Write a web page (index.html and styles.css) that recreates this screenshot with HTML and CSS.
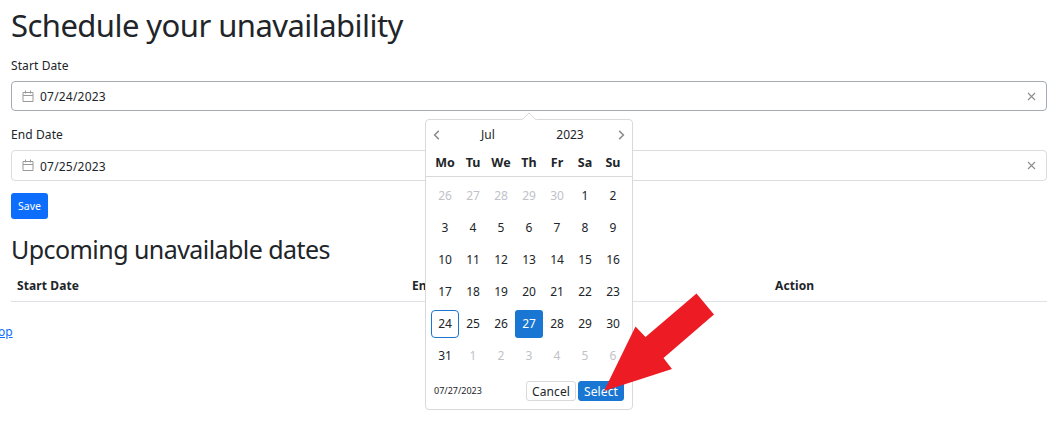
FILE: index.html
```html
<!DOCTYPE html>
<html lang="en">
<head>
<meta charset="utf-8">
<title>Schedule your unavailability</title>
<link rel="stylesheet" href="styles.css">
</head>
<body>
<main class="page">
  <h1 class="title"><span>Schedule your unavailability</span></h1>
  <label class="label">Start Date</label>
  <div class="field field-active">
    <svg class="cal-icon" viewBox="0 0 12 13"><path d="M1 2.500h10v9H1zM1 5.500h10M3.500 .5v3M8.500 .5v3"/></svg>
    <span class="value">07/24/2023</span>
    <svg class="clear-icon" viewBox="0 0 9 9"><path d="M1 1l7 7M8 1L1 8"/></svg>
    <div class="picker">
      <svg class="picker-tip" viewBox="0 0 16 9"><path class="tip-fill" d="M0 9V8L2 7L8 1L14 7L16 8V9z"/><path class="tip-line" d="M1 7.5L2.5 6.5L8 1L13.500 6.5L15 7.5"/></svg>
      <div class="picker-head">
        <svg class="chevron" viewBox="0 0 7 10"><path d="M5.800 .9L1.600 5l4.200 4.100"/></svg>
        <span class="month">Jul</span>
        <span class="year">2023</span>
        <svg class="chevron" viewBox="0 0 7 10"><path d="M1.200 .9L5.400 5l-4.200 4.100"/></svg>
      </div>
      <div class="weekdays"><b>Mo</b><b>Tu</b><b>We</b><b>Th</b><b>Fr</b><b>Sa</b><b>Su</b></div>
      <div class="days">
        <span class="out">26</span><span class="out">27</span><span class="out">28</span><span class="out">29</span><span class="out">30</span><span>1</span><span>2</span>
        <span>3</span><span>4</span><span>5</span><span>6</span><span>7</span><span>8</span><span>9</span>
        <span>10</span><span>11</span><span>12</span><span>13</span><span>14</span><span>15</span><span>16</span>
        <span>17</span><span>18</span><span>19</span><span>20</span><span>21</span><span>22</span><span>23</span>
        <span class="current">24</span><span>25</span><span>26</span><span class="selected">27</span><span>28</span><span>29</span><span>30</span>
        <span>31</span><span class="out">1</span><span class="out">2</span><span class="out">3</span><span class="out">4</span><span class="out">5</span><span class="out">6</span>
      </div>
      <div class="picker-foot">
        <span class="preview">07/27/2023</span>
        <button class="btn btn-cancel">Cancel</button>
        <button class="btn btn-select">Select</button>
      </div>
    </div>
  </div>
  <label class="label label-end">End Date</label>
  <div class="field field-end">
    <svg class="cal-icon" viewBox="0 0 12 13"><path d="M1 2.500h10v9H1zM1 5.500h10M3.500 .5v3M8.500 .5v3"/></svg>
    <span class="value">07/25/2023</span>
    <svg class="clear-icon" viewBox="0 0 9 9"><path d="M1 1l7 7M8 1L1 8"/></svg>
  </div>
  <button class="save">Save</button>
  <h2 class="subtitle"><span>Upcoming unavailable dates</span></h2>
  <div class="table-head"><b>Start Date</b><b>End Date</b><b>Action</b></div>
  <a class="link">op</a>
</main>
<svg class="arrow" viewBox="0 0 110 99"><path d="M92.500 .5L110 21.500L59.500 65L68 76L0 98L31.500 33.500L41.500 44z"/></svg>
</body>
</html>
```
FILE: styles.css
```css
* { box-sizing: border-box; }
body {
  margin: 0;
  width: 1061px;
  height: 422px;
  overflow: hidden;
  position: relative;
  background: #fff;
  color: #212529;
  font: 12px/18px "Noto Sans", "Open Sans", sans-serif;
}
svg { display: block; fill: none; }
button { font-family: inherit; margin: 0; padding: 0; }
.page { display: flex; flex-direction: column; padding: 6px 14px 0 11px; }
.title { margin: 0 0 13px; font-size: 31px; line-height: 38px; font-weight: 400; letter-spacing: -.55px; white-space: nowrap; }
.label { height: 18px; margin-bottom: 6px; letter-spacing: .1px; }
.field {
  position: relative;
  display: flex;
  align-items: center;
  height: 30px;
  padding: 0 10px;
  border: 1px solid #dadce0;
  border-radius: 4px;
}
.field-active { border-color: #a5abb3; }
.field-end { height: 31px; }
.label-end { margin-top: 15px; }
.value { margin-left: 6px; padding-top: 2px; flex: 1; letter-spacing: .2px; }
.cal-icon { width: 12px; height: 13px; stroke: #999; }
.clear-icon { width: 9px; height: 9px; stroke: #8c8c8c; stroke-width: 1.1; }
.save {
  width: 37px;
  height: 26px;
  margin-top: 12px;
  border: 0;
  border-radius: 3px;
  background: #0d6efd;
  color: #fff;
  font-size: 10.500px;
  line-height: 26px;
}
.subtitle { margin: 14px 0 0; font-size: 25px; line-height: 32px; font-weight: 400; letter-spacing: -.56px; }
.table-head {
  display: grid;
  grid-template-columns: 395px 363px 1fr;
  height: 37px;
  padding: 12px 6px 0;
  border-bottom: 1px solid #dee2e6;
  letter-spacing: .1px;
}
.link { width: 15px; margin: 21px 0 0 -13px; color: #0d6efd; text-decoration: underline; }

/* Calendar popup over the form */
.picker {
  position: absolute;
  z-index: 2;
  left: 413px;
  top: 37px;
  width: 208px;
  height: 291px;
  border: 1px solid #d9d9d9;
  border-radius: 4px;
  background: #fff;
  color: #212529;
}
.picker-tip { position: absolute; left: 95px; top: -8px; width: 16px; height: 9px; }
.tip-fill { fill: #fff; }
.tip-line { stroke: #d9d9d9; }
.picker-head { display: flex; align-items: center; height: 30px; padding: 0 7px; }
.chevron { width: 7px; height: 10px; stroke: #8c8c8c; stroke-width: 1.500; }
.month, .year { flex: 1; text-align: center; }
.month { padding-left: 7px; }
.year { padding-right: 7px; }
.weekdays {
  display: grid;
  grid-template-columns: repeat(7, 28px);
  justify-content: center;
  height: 27px;
  padding-top: 4px;
  border-bottom: 1px solid #d9d9d9;
  text-align: center;
  font-size: 12.500px;
}
.days {
  display: grid;
  grid-template-columns: repeat(7, 28px);
  grid-auto-rows: 28px;
  row-gap: 4px;
  justify-content: center;
  padding-top: 5px;
  text-align: center;
  line-height: 28px;
}
.out { color: #bfc2c9; }
.current { border: 1px solid #1976d2; border-radius: 4px; line-height: 26px; }
.selected { border-radius: 3px; background: #1976d2; color: #fff; }
.picker-foot { display: flex; align-items: center; gap: 2px; margin-top: 11px; padding: 0 8px; }
.preview { flex: 1; font-size: 9px; }
.btn { height: 20px; padding-top: 1px; border-radius: 3px; font-size: 12px; line-height: 18px; color: #212529; letter-spacing: .1px; }
.btn-cancel { width: 50px; border: 1px solid #d9d9d9; background: #fff; }
.btn-select { width: 46px; border: 1px solid #1976d2; background: #1976d2; color: #fff; }

/* Pointer arrow over the popup */
.arrow { position: absolute; z-index: 3; left: 604px; top: 293px; width: 110px; height: 99px; fill: #ed1c24; }
```
